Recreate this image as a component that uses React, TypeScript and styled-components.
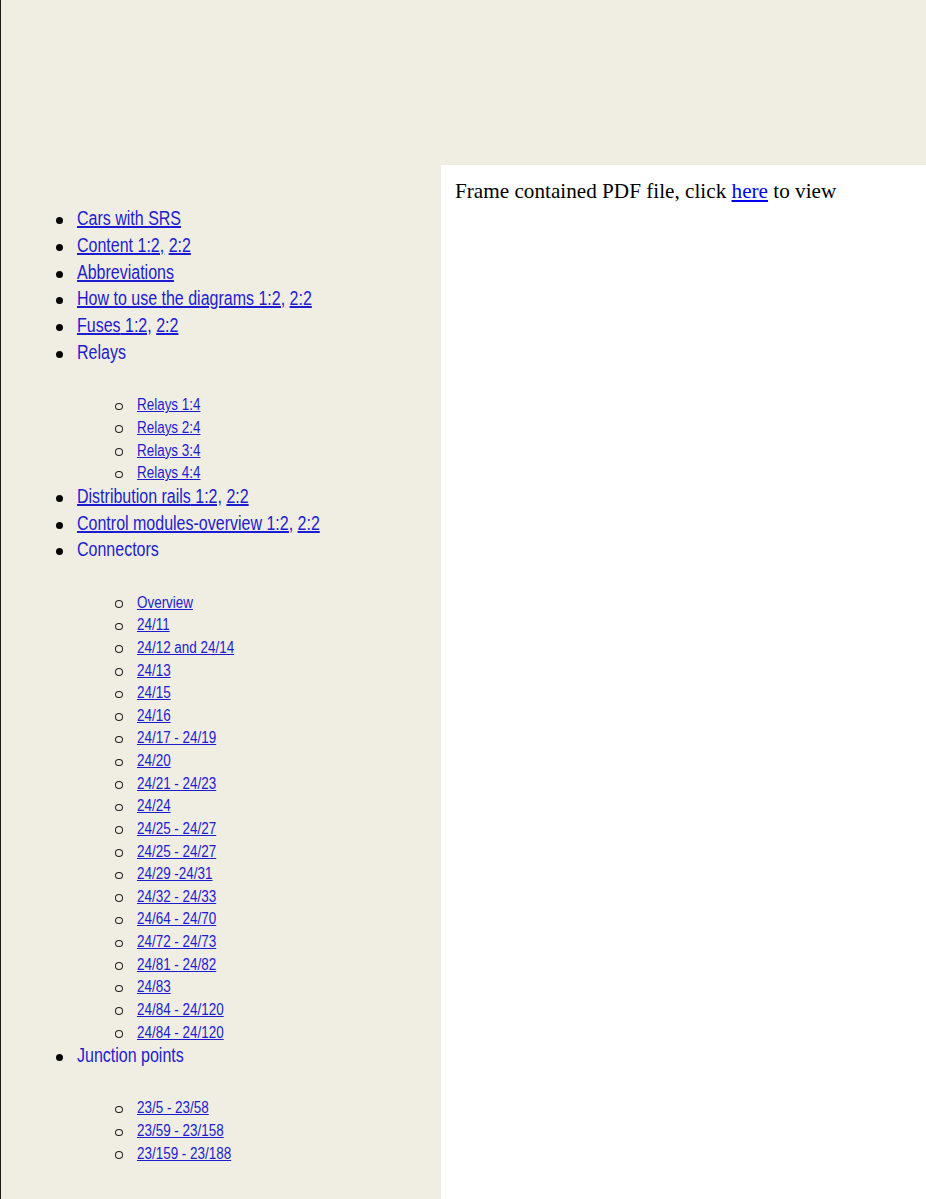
import React from 'react';
import styled, { createGlobalStyle } from 'styled-components';

const GlobalStyle = createGlobalStyle`
  html, body {
    margin: 0;
    padding: 0;
  }
  body {
    background: #f0ede2;
    font-family: 'Liberation Serif', serif;
  }
`;

const Page = styled.div`
  width: 926px;
  height: 1199px;
  overflow: hidden;
  box-sizing: border-box;
  border-left: 1px solid #1a1a1a;
  background: #f0ede2;
  display: grid;
  grid-template-rows: 165px 1fr;
`;

const TopBand = styled.div`
  background: #f0ede2;
`;

const Body = styled.div`
  display: grid;
  grid-template-columns: 440px 1fr;
  min-height: 0;
`;

const Sidebar = styled.nav`
  background: #f0ede2;
  padding-top: 40px;
  font-family: 'Liberation Sans', Arial, sans-serif;
`;

const Viewer = styled.main`
  background: #ffffff;
  padding: 14px;
  font-family: 'Liberation Serif', 'Times New Roman', serif;
  font-size: 21.2px;
  color: #000;
`;

const MainList = styled.ul`
  margin: 0;
  padding-left: 76px;
  list-style: none;
`;

const MainItem = styled.li`
  position: relative;
  font-size: 20px;
  line-height: 26.8px;
  color: #000;

  &::before {
    content: '';
    position: absolute;
    left: -21px;
    top: 12px;
    width: 7px;
    height: 7px;
    border-radius: 50%;
    background: #050505;
  }
`;

const SubList = styled.ul`
  margin: 28.5px 0 -2px 0;
  padding-left: 60px;
  list-style: none;
`;

const SubItem = styled.li`
  position: relative;
  font-size: 16px;
  line-height: 22.63px;
  color: #000;

  &::before {
    content: '';
    position: absolute;
    left: -22px;
    top: 8.5px;
    width: 6px;
    height: 5.5px;
    border: 1px solid #222;
    border-right-width: 1.6px;
    border-bottom-width: 1.3px;
    border-radius: 50%;
  }
`;

/* the sidebar text in the picture is a narrow sans, squeezed from Arial */
const Narrow = styled.span<{ $scale: number }>`
  display: inline-block;
  white-space: nowrap;
  transform: scaleX(${(p) => p.$scale});
  transform-origin: left center;
  color: #1c1cd0;
`;

const NavLink = styled.a`
  color: #1c1cd0;
  text-decoration: underline;
`;

const PdfLink = styled.a`
  color: #0000ee;
  text-decoration: underline;
`;

const MAIN_SCALE = 0.8;
const SUB_SCALE = 0.84;

const relays = ['Relays 1:4', 'Relays 2:4', 'Relays 3:4', 'Relays 4:4'];

const connectors = [
  'Overview',
  '24/11',
  '24/12 and 24/14',
  '24/13',
  '24/15',
  '24/16',
  '24/17 - 24/19',
  '24/20',
  '24/21 - 24/23',
  '24/24',
  '24/25 - 24/27',
  '24/25 - 24/27',
  '24/29 -24/31',
  '24/32 - 24/33',
  '24/64 - 24/70',
  '24/72 - 24/73',
  '24/81 - 24/82',
  '24/83',
  '24/84 - 24/120',
  '24/84 - 24/120',
];

const junctions = ['23/5 - 23/58', '23/59 - 23/158', '23/159 - 23/188'];

const Entry: React.FC<{ children: React.ReactNode }> = ({ children }) => (
  <MainItem>
    <Narrow $scale={MAIN_SCALE}>{children}</Narrow>
  </MainItem>
);

const TwoParts: React.FC<{ label: string }> = ({ label }) => (
  <Entry>
    <NavLink href="#">{label} 1:2,</NavLink> <NavLink href="#">2:2</NavLink>
  </Entry>
);

const Group: React.FC<{ label: string; items: string[] }> = ({ label, items }) => (
  <MainItem>
    <Narrow $scale={MAIN_SCALE}>{label}</Narrow>
    <SubList>
      {items.map((item, i) => (
        <SubItem key={i}>
          <Narrow $scale={SUB_SCALE}>
            <NavLink href="#">{item}</NavLink>
          </Narrow>
        </SubItem>
      ))}
    </SubList>
  </MainItem>
);

const App: React.FC = () => {
  return (
    <>
      <GlobalStyle />
      <Page>
        <TopBand />
        <Body>
          <Sidebar>
            <MainList>
              <Entry>
                <NavLink href="#">Cars with SRS</NavLink>
              </Entry>
              <TwoParts label="Content" />
              <Entry>
                <NavLink href="#">Abbreviations</NavLink>
              </Entry>
              <TwoParts label="How to use the diagrams" />
              <TwoParts label="Fuses" />
              <Group label="Relays" items={relays} />
              <TwoParts label="Distribution rails" />
              <TwoParts label="Control modules-overview" />
              <Group label="Connectors" items={connectors} />
              <Group label="Junction points" items={junctions} />
            </MainList>
          </Sidebar>
          <Viewer>
            Frame contained PDF file, click <PdfLink href="#">here</PdfLink> to view
          </Viewer>
        </Body>
      </Page>
    </>
  );
};

export default App;
